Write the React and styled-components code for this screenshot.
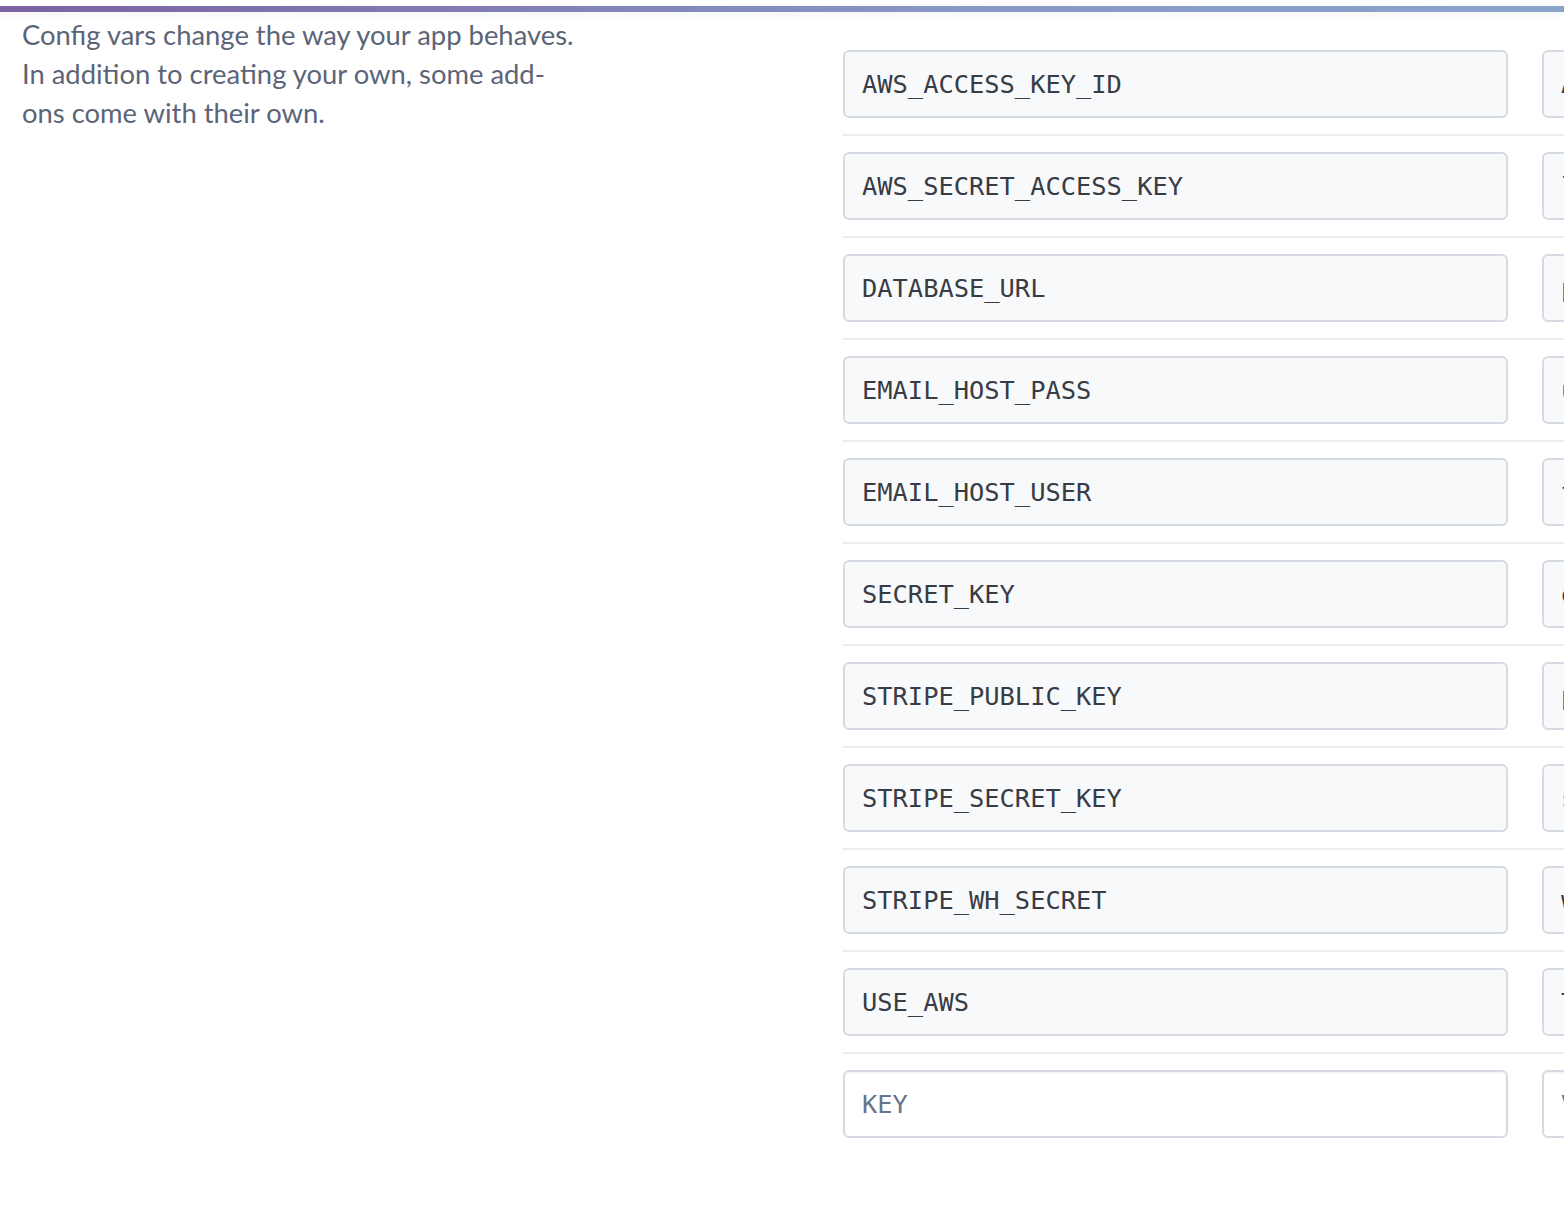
import React from "react";
import styled, { createGlobalStyle } from "styled-components";

const vars = [
  { key: "AWS_ACCESS_KEY_ID", value: "AKIA4XQ7Z2LMN8RT5VWB" },
  { key: "AWS_SECRET_ACCESS_KEY", value: "lB7xQk2mP9vR4tZ8wN3cF6hJ1sD5gA0yE" },
  { key: "DATABASE_URL", value: "postgres://ubxkqlmzrt:8f3a@ec2.compute.amazonaws.com:5432/d9" },
  { key: "EMAIL_HOST_PASS", value: "uqvwxzrtmnbklsdf" },
  { key: "EMAIL_HOST_USER", value: "testshop.mail@gmail.com" },
  { key: "SECRET_KEY", value: "e8#k2m!p4q@r6s$t9u&v1w*x3y" },
  { key: "STRIPE_PUBLIC_KEY", value: "pk_test_51HxQ2KLm8N3vB7cR" },
  { key: "STRIPE_SECRET_KEY", value: "sk_test_51HxQ2KLm8N3vB7cR" },
  { key: "STRIPE_WH_SECRET", value: "whsec_9Fk2Lm8N3vB7cRq4Tz" },
  { key: "USE_AWS", value: "True" },
];

const GlobalStyle = createGlobalStyle`
  body {
    margin: 0;
    background: #ffffff;
    overflow: hidden;
  }
`;

const Page = styled.div`
  width: 1564px;
  height: 1214px;
  overflow: hidden;
  padding-top: 6px;
  box-sizing: border-box;
`;

const TopBar = styled.div`
  height: 6px;
  background: linear-gradient(90deg, #7b62a3 0%, #8797c4 60%, #8aa4cc 100%);
  box-shadow: 0 3px 8px rgba(0, 0, 0, 0.06);
`;

const Content = styled.div`
  display: grid;
  grid-template-columns: 821px 1fr;
  padding-left: 22px;
`;

const Description = styled.p`
  margin: 0;
  padding-top: 3px;
  max-width: 563px;
  font-family: Lato, "Open Sans", sans-serif;
  font-size: 27.4px;
  line-height: 39px;
  color: #5b6577;
`;

const Form = styled.div`
  display: flex;
  flex-direction: column;
  padding-top: 38px;
  min-width: 0;
`;

const Row = styled.div`
  display: flex;
  gap: 34px;
  padding-bottom: 16px;
  margin-bottom: 16px;
  border-bottom: ${(p) => (p.$last ? "none" : "2px solid #e9ecf1")};
`;

const Field = styled.input`
  flex: 0 0 665px;
  width: 665px;
  height: 68px;
  box-sizing: border-box;
  padding: 0 17px;
  border: 2px solid #d5dae3;
  border-radius: 6px;
  background: ${(p) => (p.$blank ? "#ffffff" : "#f8f9fb")};
  font-family: "DejaVu Sans Mono", "Liberation Mono", monospace;
  font-size: 25.4px;
  line-height: normal;
  color: #383c45;
  outline: none;
  box-shadow: ${(p) => (p.$blank ? "inset 0 1px 2px rgba(0,0,0,0.06)" : "none")};

  &::placeholder {
    color: #66748a;
  }
`;

export default function App() {
  return (
    <Page>
      <GlobalStyle />
      <TopBar />
      <Content>
        <Description>
          Config vars change the way your app behaves. In addition to creating
          your own, some add-ons come with their own.
        </Description>
        <Form>
          {vars.map((v) => (
            <Row key={v.key}>
              <Field readOnly defaultValue={v.key} />
              <Field readOnly defaultValue={v.value} />
            </Row>
          ))}
          <Row $last>
            <Field $blank placeholder="KEY" />
            <Field $blank placeholder="VALUE" />
          </Row>
        </Form>
      </Content>
    </Page>
  );
}
